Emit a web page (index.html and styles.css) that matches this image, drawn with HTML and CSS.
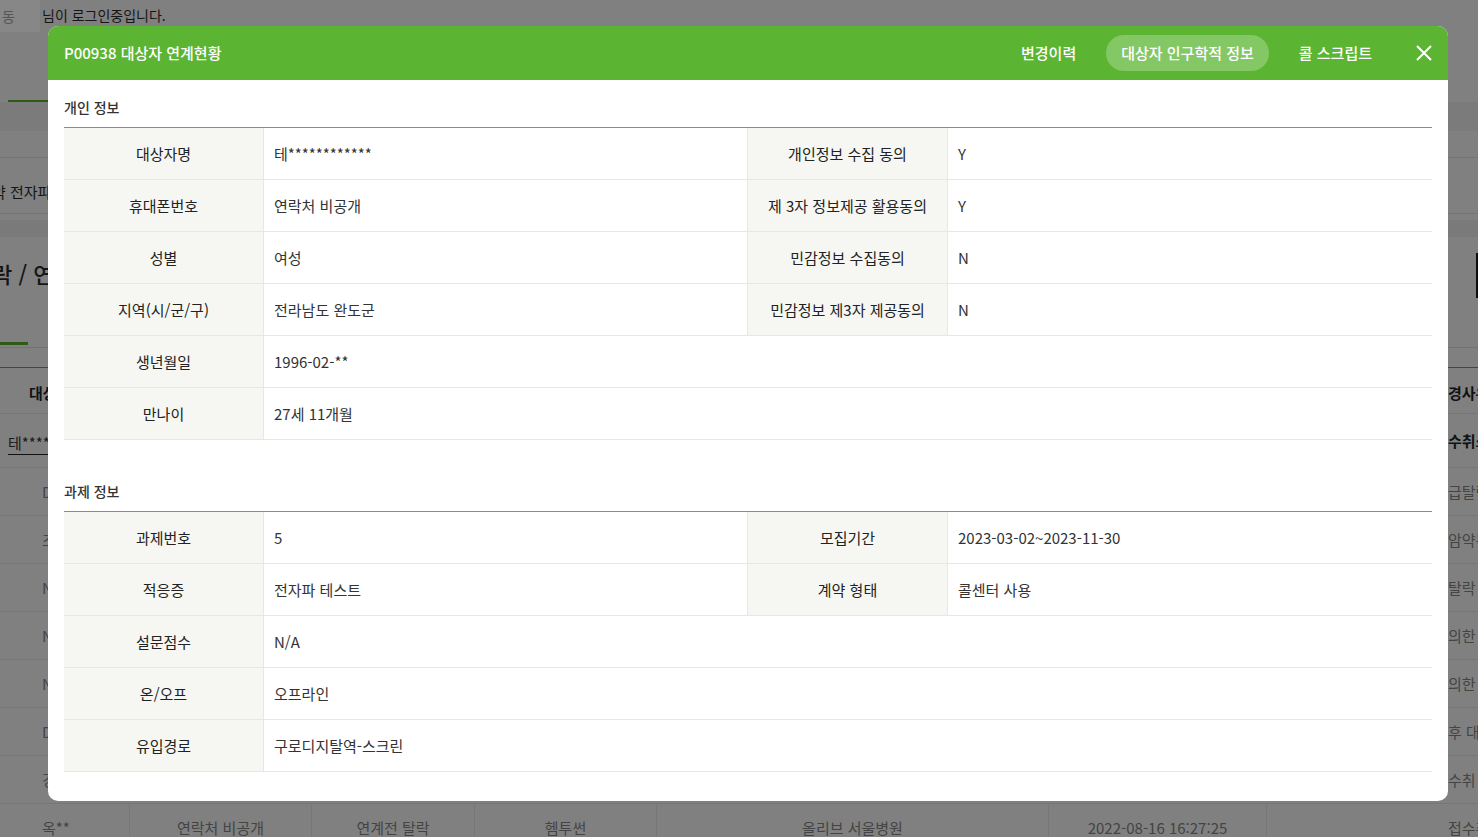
FILE: index.html
```html
<!DOCTYPE html>
<html lang="ko">
<head>
<meta charset="utf-8">
<title>P00938 대상자 연계현황</title>
<link rel="stylesheet" href="styles.css">
</head>
<body>
<div class="page">
  <div class="topbar">
    <div class="topcell">동</div>
    <div class="login">님이 로그인중입니다.</div>
  </div>
  <div class="nav"><div class="navtab"></div></div>
  <div class="band"></div>
  <div class="spacer"></div>
  <div class="filter-row"><span class="filter-text">약 전자파 테스트</span></div>
  <div class="band2"></div>
  <div class="title-row">
    <h2 class="page-title">락 / 연계현황</h2>
    <div class="edge-btn"></div>
  </div>
  <div class="subtabs"><div class="subtab"></div></div>
  <table class="list">
    <colgroup>
      <col class="c1"><col class="c2"><col class="c3"><col class="c4"><col class="c5"><col class="c6"><col class="c7">
    </colgroup>
    <tr class="head">
      <td class="first hd">대상자명</td><td></td><td></td><td></td><td></td><td></td><td class="last bold">경사유</td>
    </tr>
    <tr class="row1">
      <td class="first"><span class="ulink">테*************</span></td><td></td><td></td><td></td><td></td><td></td><td class="last bold">수취소</td>
    </tr>
    <tr class="row"><td class="first">D****</td><td></td><td></td><td></td><td></td><td></td><td class="last">급탈락</td></tr>
    <tr class="row"><td class="first">조**</td><td></td><td></td><td></td><td></td><td></td><td class="last">암약복</td></tr>
    <tr class="row"><td class="first">N****</td><td></td><td></td><td></td><td></td><td></td><td class="last">탈락</td></tr>
    <tr class="row"><td class="first">N****</td><td></td><td></td><td></td><td></td><td></td><td class="last">의한</td></tr>
    <tr class="row"><td class="first">N****</td><td></td><td></td><td></td><td></td><td></td><td class="last">의한</td></tr>
    <tr class="row"><td class="first">D****</td><td></td><td></td><td></td><td></td><td></td><td class="last">후 대</td></tr>
    <tr class="row"><td class="first">경**</td><td></td><td></td><td></td><td></td><td></td><td class="last">수취</td></tr>
    <tr class="row sep"><td class="first">옥**</td><td>연락처 비공개</td><td>연계전 탈락</td><td>헴투썬</td><td>올리브 서울병원</td><td>2022-08-16 16:27:25</td><td class="last">접수취소</td></tr>
  </table>
</div>

<div class="modal">
  <div class="modal-head">
    <div class="modal-title">P00938 대상자 연계현황</div>
    <div class="tabs">
      <span class="tab">변경이력</span>
      <span class="tab active">대상자 인구학적 정보</span>
      <span class="tab">콜 스크립트</span>
    </div>
    <button class="close" type="button" aria-label="닫기">
      <svg width="16" height="16" viewBox="0 0 16 16"><path d="M1 1 L15 15 M15 1 L1 15" stroke="#fff" stroke-width="2" fill="none"/></svg>
    </button>
  </div>
  <div class="modal-body">
    <div class="sec-title">개인 정보</div>
    <table class="info">
      <colgroup><col class="lab"><col class="val"><col class="lab"><col class="val"></colgroup>
      <tr><th>대상자명</th><td>테************</td><th>개인정보 수집 동의</th><td class="end">Y</td></tr>
      <tr><th>휴대폰번호</th><td>연락처 비공개</td><th>제 3자 정보제공 활용동의</th><td class="end">Y</td></tr>
      <tr><th>성별</th><td>여성</td><th>민감정보 수집동의</th><td class="end">N</td></tr>
      <tr><th>지역(시/군/구)</th><td>전라남도 완도군</td><th>민감정보 제3자 제공동의</th><td class="end">N</td></tr>
      <tr><th>생년월일</th><td colspan="3" class="end">1996-02-**</td></tr>
      <tr><th>만나이</th><td colspan="3" class="end">27세 11개월</td></tr>
    </table>

    <div class="sec-title second">과제 정보</div>
    <table class="info">
      <colgroup><col class="lab"><col class="val"><col class="lab"><col class="val"></colgroup>
      <tr><th>과제번호</th><td>5</td><th>모집기간</th><td class="end">2023-03-02~2023-11-30</td></tr>
      <tr><th>적응증</th><td>전자파 테스트</td><th>계약 형태</th><td class="end">콜센터 사용</td></tr>
      <tr><th>설문점수</th><td colspan="3" class="end">N/A</td></tr>
      <tr><th>온/오프</th><td colspan="3" class="end">오프라인</td></tr>
      <tr><th>유입경로</th><td colspan="3" class="end">구로디지탈역-스크린</td></tr>
    </table>
  </div>
</div>
</body>
</html>
```

FILE: styles.css
```css
* { box-sizing: border-box; }
html, body {
  margin: 0;
  padding: 0;
  height: 100%;
  overflow: hidden;
}
body {
  background: #808080;
  font-family: "Noto Sans CJK KR", "Noto Sans", sans-serif;
  font-size: 14px;
  color: #111;
}

/* ---- dimmed background page ---- */
.page { width: 1478px; }
.topbar { display: flex; height: 32px; }
.topcell {
  width: 40px; background: #878787; color: #555;
  line-height: 32px; padding-left: 2px; overflow: hidden; white-space: nowrap;
}
.login { padding-left: 2px; line-height: 30px; color: #151515; }
.nav { height: 70px; display: flex; align-items: flex-end; }
.navtab { margin-left: 8px; width: 40px; height: 2px; background: #2d5b17; }
.band { height: 29px; background: #7b7b7b; }
.spacer { height: 27px; border-bottom: 1px solid #757575; }
.filter-row {
  height: 56px; border-bottom: 1px solid #757575;
  padding-top: 23px; white-space: nowrap; overflow: hidden;
}
.filter-text { display: inline-block; margin-left: -8px; font-size: 15px; line-height: 22px; color: #151515; }
.band2 { height: 17px; margin-top: 6px; background: #7a7a7a; }
.title-row { height: 105px; display: flex; align-items: flex-start; }
.page-title {
  margin: 21px 0 0 -8px; font-size: 22px; line-height: 30px;
  font-weight: 500; color: #151515; white-space: nowrap;
}
.edge-btn { margin-left: auto; margin-top: 16px; width: 2px; height: 45px; background: #0d0d0d; }
.subtabs { height: 6px; border-bottom: 1px solid #727272; }
.subtab { width: 28px; height: 3px; background: #2d5b17; }

.list {
  margin-top: 19px; width: 1478px; table-layout: fixed;
  border-collapse: separate; border-spacing: 0;
  border-top: 1px solid #2d5b17;
}
.list .c1 { width: 129px; }
.list .c2 { width: 182px; }
.list .c3 { width: 163px; }
.list .c4 { width: 182px; }
.list .c5 { width: 392px; }
.list .c6 { width: 218px; }
.list .c7 { width: 212px; }
.list td {
  padding: 0; border-bottom: 1px solid #767676;
  white-space: nowrap; overflow: hidden;
  text-align: center; color: #444; font-size: 15px;
}
.list td.first { text-align: left; padding-left: 42px; }
.list td.last { text-align: left; padding-left: 182px; }
.list .head td { height: 46px; padding-top: 4px; }
.list .head td.hd { padding-left: 29px; font-weight: 700; color: #111; }
.list .row1 td { height: 54px; }
.list .row1 td.first { padding-left: 8px; padding-top: 4px; }
.ulink { display: inline-block; border-bottom: 1px solid #111; color: #1a1a1a; line-height: 23px; }
.list td.bold { font-weight: 700; color: #111; }
.list .row td { height: 48px; }
.list .sep td { border-left: 1px solid #777; }
.list .sep td.first { border-left: 0; }
.list .sep td.last { padding-left: 181px; }

/* ---- modal ---- */
.modal {
  position: fixed; left: 48px; top: 26px;
  width: 1400px; height: 775px;
  background: #fff; border-radius: 10px; overflow: hidden;
  z-index: 10;
}
.modal-head {
  height: 54px; background: #5bb532;
  display: flex; align-items: center; padding: 0 16px;
}
.modal-title { flex: 1; color: #fff; font-size: 15px; font-weight: 500; line-height: 22px; }
.tabs { display: flex; gap: 15px; }
.tab {
  padding: 0 15px; height: 36px; line-height: 36px;
  color: #fff; font-size: 15px; font-weight: 500; border-radius: 18px;
}
.tab.active { background: rgba(255,255,255,0.25); }
.close {
  margin-left: 29px; width: 16px; height: 16px; padding: 0;
  border: 0; background: none; display: flex; cursor: pointer;
}

.modal-body { padding: 0 16px 30px; }
.sec-title {
  font-size: 14px; line-height: 20px; font-weight: 500; color: #333;
  padding: 17px 0 10px;
}
.sec-title.second { margin-top: 24px; }
.info {
  width: 100%; table-layout: fixed;
  border-collapse: separate; border-spacing: 0;
  border-top: 1px solid #5bb532;
}
.info col.lab { width: 200px; }
.info col.val { width: 484px; }
.info th, .info td {
  height: 52px; padding: 0;
  border-bottom: 1px solid #e7e7e7;
  font-size: 15px; font-weight: 400;
}
.info th {
  background: #f6f7f3; color: #222; text-align: center;
  border-right: 1px solid #e7e7e7;
}
.info td {
  color: #333; text-align: left; padding-left: 10px;
  border-right: 1px solid #e7e7e7;
}
.info td.end { border-right: 0; }
```
